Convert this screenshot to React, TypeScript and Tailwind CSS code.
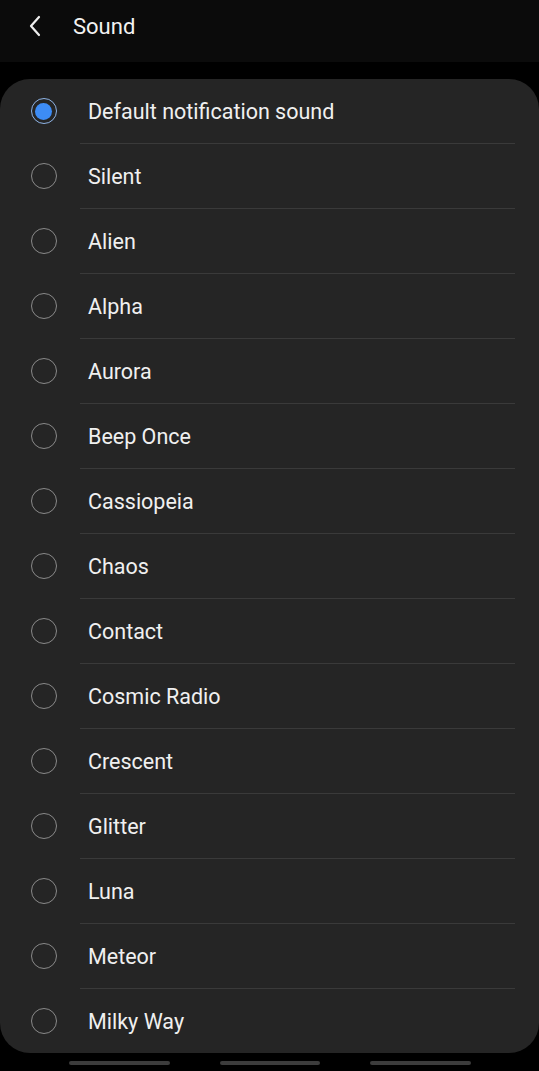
import React from 'react';

const sounds = [
  'Default notification sound',
  'Silent',
  'Alien',
  'Alpha',
  'Aurora',
  'Beep Once',
  'Cassiopeia',
  'Chaos',
  'Contact',
  'Cosmic Radio',
  'Crescent',
  'Glitter',
  'Luna',
  'Meteor',
  'Milky Way',
];

function Radio({ checked }: { checked: boolean }) {
  if (checked) {
    return (
      <div className="w-[26px] h-[26px] rounded-full border-[1.5px] border-[#8fb4e6] flex items-center justify-center">
        <div className="w-[17px] h-[17px] rounded-full bg-[#3d8cf5]" />
      </div>
    );
  }
  return <div className="w-[26px] h-[26px] rounded-full border-[1.5px] border-[#8a8a8a]" />;
}

export default function App() {
  const selected = 0;

  return (
    <div className="w-[539px] h-[1071px] bg-black overflow-hidden font-['Roboto','Liberation_Sans',sans-serif]">
      {/* Top bar */}
      <div className="h-[62px] bg-[#0b0b0b] flex items-center pb-[10px]">
        <div className="w-[70px] flex items-center justify-center">
          <svg width="14" height="22" viewBox="0 0 14 22" fill="none">
            <path d="M11 2 L3 11 L11 20" stroke="#ededed" strokeWidth="2.2" strokeLinecap="round" strokeLinejoin="round" />
          </svg>
        </div>
        <h1 className="text-[22px] text-[#f2f2f2] ml-[3px] leading-none pt-[2px]">Sound</h1>
      </div>

      {/* List card */}
      <div className="mt-[17px] bg-[#252525] rounded-[30px] overflow-hidden">
        {sounds.map((name, i) => (
          <div key={name}>
            {i > 0 && <div className="ml-[80px] mr-[24px] h-px bg-[#3a3a3a]" />}
            <div className="h-[64px] flex items-center">
              <div className="w-[86px] flex justify-center pl-[1px]">
                <Radio checked={i === selected} />
              </div>
              <span className="ml-[2px] pt-[2px] text-[21.5px] text-[#f0f0f0] leading-none">{name}</span>
            </div>
          </div>
        ))}
      </div>

      {/* Nav bar handles */}
      <div className="mt-[8px] flex justify-center gap-[50px]">
        <div className="w-[101px] h-[4px] rounded-full bg-[#3c3c3c]" />
        <div className="w-[100px] h-[4px] rounded-full bg-[#3c3c3c]" />
        <div className="w-[101px] h-[4px] rounded-full bg-[#3c3c3c]" />
      </div>
    </div>
  );
}
